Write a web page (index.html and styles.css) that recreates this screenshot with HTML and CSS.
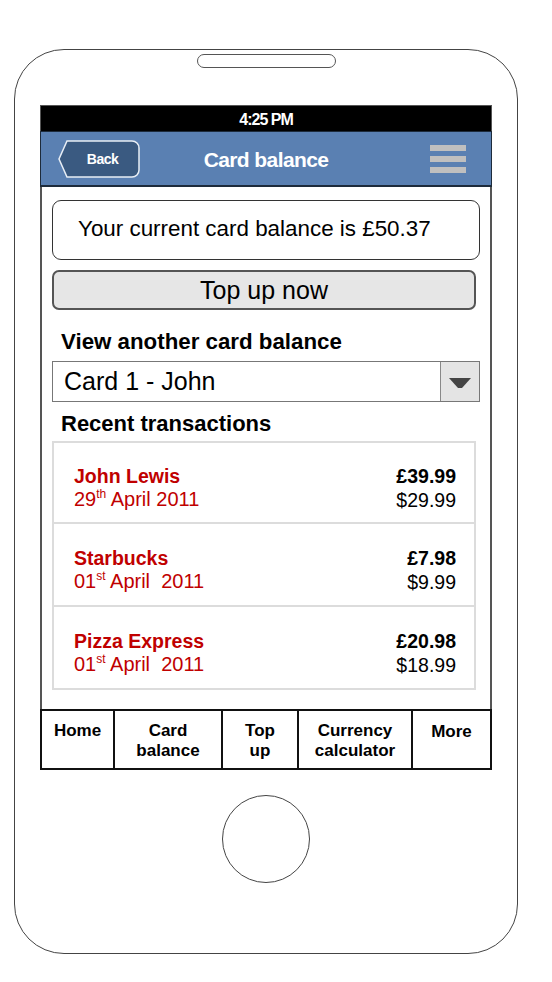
FILE: index.html
```html
<!DOCTYPE html>
<html>
<head>
<meta charset="utf-8">
<link rel="stylesheet" href="styles.css">
</head>
<body>
<div class="phone">
  <div class="speaker"></div>
  <div class="screen">
    <div class="status">4:25 PM</div>
    <div class="header">
      <div class="back">
        <svg class="back-shape" width="83" height="38" viewBox="0 0 83 38"><path d="M9 1 H74 A7 7 0 0 1 81 8 V30 A7 7 0 0 1 74 37 H9 L1 19 Z" fill="#3a5a81" stroke="#e8eef5" stroke-width="1.5"/></svg>
        <span class="back-label">Back</span>
      </div>
      <div class="title">Card balance</div>
      <div class="menu"><span></span><span></span><span></span></div>
    </div>
    <div class="content">
      <div class="balance">Your current card balance is £50.37</div>
      <div class="topup">Top up now</div>
      <div class="label">View another card balance</div>
      <div class="select">
        <div class="select-value">Card 1 - John</div>
        <div class="select-arrow"><svg width="24" height="14" viewBox="0 0 24 14"><path d="M1 2 H23 L14 12 H10 Z" fill="#444"/></svg></div>
      </div>
      <div class="label label-tx">Recent transactions</div>
      <div class="tx-list">
        <div class="tx">
          <div class="tx-left"><div class="tx-name">John Lewis</div><div class="tx-date">29<sup>th</sup> April 2011</div></div>
          <div class="tx-right"><div class="tx-gbp">£39.99</div><div class="tx-usd">$29.99</div></div>
        </div>
        <div class="tx">
          <div class="tx-left"><div class="tx-name">Starbucks</div><div class="tx-date">01<sup>st</sup> April&nbsp; 2011</div></div>
          <div class="tx-right"><div class="tx-gbp">£7.98</div><div class="tx-usd">$9.99</div></div>
        </div>
        <div class="tx">
          <div class="tx-left"><div class="tx-name">Pizza Express</div><div class="tx-date">01<sup>st</sup> April&nbsp; 2011</div></div>
          <div class="tx-right"><div class="tx-gbp">£20.98</div><div class="tx-usd">$18.99</div></div>
        </div>
      </div>
    </div>
    <div class="tabs">
      <div class="tab t-home">Home</div>
      <div class="tab t-card">Card<br>balance</div>
      <div class="tab t-top">Top<br>up</div>
      <div class="tab t-cur">Currency<br>calculator</div>
      <div class="tab t-more">More</div>
    </div>
  </div>
  <div class="home-btn"></div>
</div>
</body>
</html>
```
FILE: styles.css
```css
* { box-sizing: border-box; }
html, body { margin: 0; padding: 0; background: #fff; }
body {
  width: 552px;
  height: 982px;
  font-family: "Liberation Sans", Arial, sans-serif;
  color: #000;
  padding-top: 49px;
  padding-left: 14px;
}
.phone {
  width: 504px;
  height: 905px;
  border: 1.5px solid #444;
  border-radius: 50px;
  display: flex;
  flex-direction: column;
  align-items: center;
}
.speaker {
  width: 139px;
  height: 14px;
  margin-top: 4px;
  border: 1.5px solid #555;
  border-radius: 8px;
}
.screen {
  width: 452px;
  margin-top: 37px;
  display: flex;
  flex-direction: column;
}
.status {
  height: 26px;
  background: #000;
  color: #fff;
  font-weight: bold;
  font-size: 16px;
  letter-spacing: -1px;
  text-align: center;
  line-height: 27px;
  border: 1px solid #555;
  border-bottom: none;
}
.header {
  height: 56px;
  background: #5a80b2;
  border: 1px solid #1d2b3b;
  border-bottom-width: 2px;
  display: flex;
  align-items: center;
  padding-left: 17px;
}
.back {
  position: relative;
  width: 83px;
  height: 38px;
  display: flex;
  align-items: center;
  justify-content: center;
}
.back-shape { position: absolute; left: 0; top: 0; }
.back-label {
  position: relative;
  color: #fff;
  font-weight: bold;
  font-size: 14px;
  letter-spacing: -0.5px;
  padding-left: 6px;
  padding-top: 1px;
}
.title {
  flex: 1;
  text-align: center;
  color: #fff;
  font-weight: bold;
  font-size: 21px;
  letter-spacing: -0.6px;
  padding-right: 39px;
  padding-top: 2px;
}
.menu {
  width: 36px;
  margin-right: 25px;
  display: flex;
  flex-direction: column;
  gap: 5px;
}
.menu span {
  display: block;
  height: 6px;
  background: #bfbfbf;
}
.content {
  height: 522px;
  border-left: 2px solid #555;
  border-right: 2px solid #555;
  padding: 13px 10px 0 10px;
  display: flex;
  flex-direction: column;
}
.balance {
  height: 60px;
  border: 1.5px solid #333;
  border-radius: 9px;
  font-size: 22.4px;
  padding-left: 25px;
  display: flex;
  align-items: center;
  padding-bottom: 2px;
}
.topup {
  margin-top: 10px;
  width: 424px;
  height: 40px;
  background: #e6e6e6;
  border: 2px solid #555;
  border-radius: 7px;
  font-size: 25px;
  text-align: center;
  line-height: 36px;
}
.label {
  margin-top: 20px;
  padding-left: 9px;
  font-weight: bold;
  font-size: 22.3px;
  line-height: 23px;
}
.select {
  margin-top: 8px;
  height: 41px;
  border: 1.5px solid #777;
  display: flex;
}
.select-value {
  flex: 1;
  font-size: 25px;
  padding-left: 11px;
  line-height: 38px;
}
.select-arrow {
  width: 39px;
  background: #e4e4e4;
  border-left: 1.5px solid #888;
  display: flex;
  align-items: center;
  justify-content: center;
  padding-top: 2px;
}
.label-tx { margin-top: 10px; font-size: 22px; }
.tx-list {
  margin-top: 6px;
  width: 424px;
  border: 2px solid #dcdcdc;
}
.tx {
  height: 83px;
  display: flex;
  justify-content: space-between;
  padding: 23px 18px 0 20px;
  border-top: 2px solid #dcdcdc;
}
.tx:first-child { border-top: none; height: 79px; padding-top: 22px; }
.tx-left { color: #c00000; }
.tx-name { font-weight: bold; font-size: 19.5px; line-height: 23px; }
.tx-date { font-size: 20px; line-height: 23px; }
.tx-date sup { font-size: 12px; vertical-align: 8px; line-height: 0; }
.tx-right { text-align: right; }
.tx-gbp { font-weight: bold; font-size: 19.5px; line-height: 23px; }
.tx-usd { font-size: 19.5px; line-height: 25px; }
.tabs {
  height: 61px;
  display: flex;
  border: 2px solid #111;
}
.tab {
  font-weight: bold;
  font-size: 17px;
  line-height: 20px;
  text-align: center;
  padding-top: 10px;
  border-left: 2px solid #111;
}
.tab:first-child { border-left: none; }
.t-home { width: 71px; }
.t-card { width: 108px; }
.t-top { width: 76px; }
.t-cur { width: 114px; }
.t-more { flex: 1; padding-top: 11px; }
.home-btn {
  margin-top: 25px;
  width: 88px;
  height: 88px;
  border: 1.5px solid #444;
  border-radius: 50%;
}
```
